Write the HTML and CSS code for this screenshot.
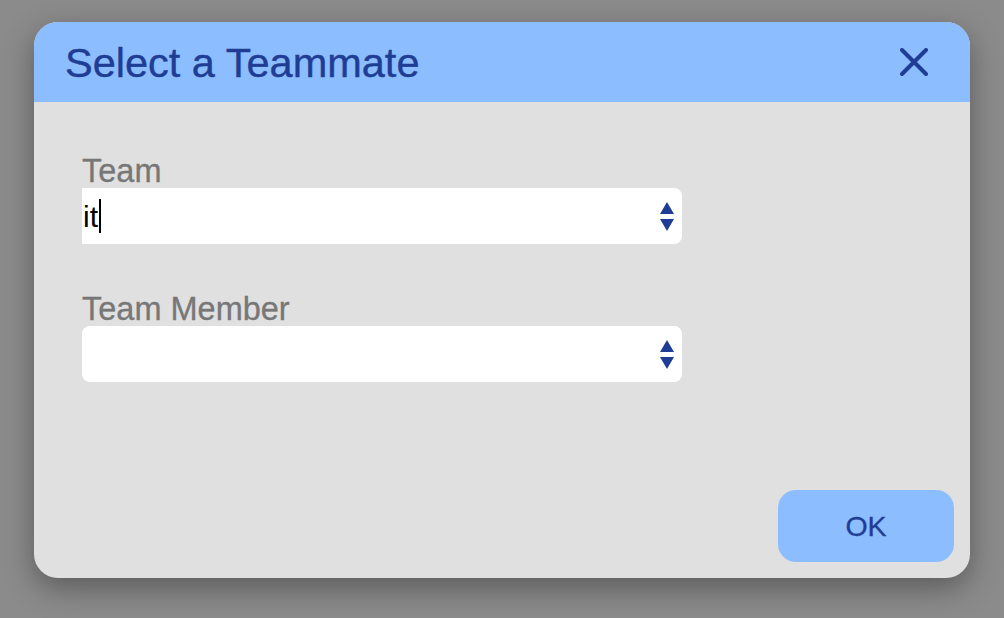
FILE: index.html
```html
<!DOCTYPE html>
<html>
<head>
<meta charset="utf-8">
<link rel="stylesheet" href="styles.css">
</head>
<body>
<div class="dialog">
  <div class="header">
    <div class="title">Select a Teammate</div>
    <button class="close" aria-label="Close">
      <svg width="28" height="28" viewBox="0 0 28 28"><path d="M2 2 L26 26 M26 2 L2 26" stroke="#1f3d94" stroke-width="4" stroke-linecap="round" fill="none"/></svg>
    </button>
  </div>
  <div class="content">
    <div class="field">
      <div class="label">Team</div>
      <div class="select focused">
        <span class="value">it</span><span class="caret"></span>
        <span class="spinner"><span class="up"></span><span class="down"></span></span>
      </div>
    </div>
    <div class="field">
      <div class="label">Team Member</div>
      <div class="select">
        <span class="value"></span>
        <span class="spinner"><span class="up"></span><span class="down"></span></span>
      </div>
    </div>
    <div class="actions">
      <button class="ok">OK</button>
    </div>
  </div>
</div>
</body>
</html>
```
FILE: styles.css
```css
html, body {
  margin: 0;
  height: 100%;
}
body {
  background: #8b8b8b;
  font-family: "Liberation Sans", Arial, sans-serif;
  padding: 22px 34px 0;
  box-sizing: border-box;
}
.dialog {
  width: 936px;
  height: 556px;
  background: #e0e0e0;
  border-radius: 24px;
  overflow: hidden;
  display: flex;
  flex-direction: column;
  box-shadow: 0 10px 30px rgba(0, 0, 0, 0.35);
}
.header {
  height: 80px;
  background: #8cbdff;
  display: flex;
  align-items: center;
  justify-content: space-between;
  padding: 0 42px 0 31px;
  flex: none;
}
.title {
  font-size: 41.5px;
  line-height: 80px;
  padding-top: 2px;
  color: #1f3d94;
  -webkit-text-stroke: 0.4px #1f3d94;
}
.close {
  border: 0;
  background: none;
  padding: 0;
  width: 28px;
  height: 28px;
  display: block;
}
.close svg { display: block; }
.content {
  flex: 1;
  display: flex;
  flex-direction: column;
  padding: 52px 16px 16px 48px;
}
.field {
  display: flex;
  flex-direction: column;
  width: 600px;
}
.field + .field {
  margin-top: 48px;
}
.label {
  font-size: 32.5px;
  line-height: 34px;
  color: #777777;
  -webkit-text-stroke: 0.3px #777777;
}
.select {
  height: 56px;
  background: #ffffff;
  border-radius: 8px;
  display: flex;
  align-items: center;
  padding: 0 8px 0 1px;
  box-sizing: border-box;
}
.select.focused {
  border-radius: 0 8px 8px 0;
}
.value {
  font-size: 30px;
  line-height: 56px;
  color: #000;
  padding-top: 2px;
}
.caret {
  width: 2px;
  height: 34px;
  background: #000;
  margin-left: 1px;
}
.spinner {
  margin-left: auto;
  display: flex;
  flex-direction: column;
  align-items: center;
  gap: 5px;
}
.up {
  width: 0;
  height: 0;
  border-left: 7.5px solid transparent;
  border-right: 7.5px solid transparent;
  border-bottom: 12.5px solid #1f3d94;
}
.down {
  width: 0;
  height: 0;
  border-left: 7.5px solid transparent;
  border-right: 7.5px solid transparent;
  border-top: 12.5px solid #1f3d94;
}
.actions {
  margin-top: auto;
  display: flex;
  justify-content: flex-end;
}
.ok {
  width: 176px;
  height: 72px;
  border: 0;
  border-radius: 18px;
  background: #8cbdff;
  color: #1f3d94;
  font-family: "Liberation Sans", Arial, sans-serif;
  font-size: 28.5px;
  padding: 0;
  -webkit-text-stroke: 0.3px #1f3d94;
}
```
